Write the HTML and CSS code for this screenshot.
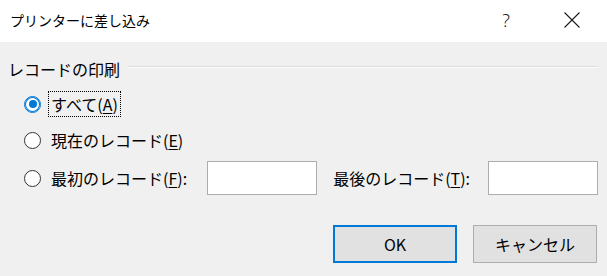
FILE: index.html
```html
<!DOCTYPE html>
<html lang="ja">
<head>
    <meta charset="UTF-8">
    <title>プリンターに差し込み</title>
    <link rel="stylesheet" href="styles.css">
</head>
<body>
    <div class="dialog">
        <!-- タイトルバー -->
        <div class="titlebar">
            <span class="title">プリンターに差し込み</span>
            <span class="help">?</span>
            <span class="close">
                <svg width="16" height="16" viewBox="0 0 16 16"><path d="M0.5 0.5 L15.5 15.5 M15.5 0.5 L0.5 15.5" stroke="#1a1a1a" stroke-width="1.1" fill="none"/></svg>
            </span>
        </div>

        <div class="content">
            <!-- レコードの印刷 -->
            <div class="group-head">
                <span class="group-label">レコードの印刷</span>
                <span class="group-line"></span>
            </div>

            <div class="row row-first">
                <span class="radio checked"></span>
                <span class="label focus">すべて(<u>A</u>)</span>
            </div>
            <div class="row row-second">
                <span class="radio"></span>
                <span class="label">現在のレコード(<u>E</u>)</span>
            </div>
            <div class="row row-range">
                <span class="radio"></span>
                <span class="label">最初のレコード(<u>F</u>):</span>
                <span class="input input-from"></span>
                <span class="label label-to">最後のレコード(<u>T</u>):</span>
                <span class="input input-to"></span>
            </div>

            <div class="buttons">
                <button class="btn btn-default">OK</button>
                <button class="btn">キャンセル</button>
            </div>
        </div>
    </div>
</body>
</html>
```

FILE: styles.css
```css
body { margin: 0; padding: 0; background: #f0f0f0; }
.dialog {
    width: 607px; height: 276px; background: #f0f0f0; color: #000;
    font-family: "Segoe UI", "Noto Sans CJK JP", sans-serif; font-size: 16px;
}
/* タイトルバー */
.titlebar {
    height: 42px; background: #fff; display: flex; align-items: center;
    padding-left: 10px;
}
.title { font-size: 14px; flex: 1; margin-top: -2px; }
.help { font-family: "Noto Sans", sans-serif; font-size: 18px; font-weight: 300; color: #222; margin-right: 54px; margin-top: -3px; }
.close { width: 16px; height: 16px; margin-right: 27px; margin-top: -2px; display: flex; }
/* 本体 */
.content { padding: 0 9px 0 8px; }
.group-head { display: flex; height: 22px; margin-top: 16px; }
.group-label { line-height: 22px; }
.group-line {
    flex: 1; height: 1px; margin-top: 8px; margin-left: 8px;
    background: #dcdcdc; border-bottom: 1px solid #fff;
}
.row { display: flex; align-items: center; }
.row-first { height: 26px; margin-top: 11px; }
.row-second { height: 26px; margin-top: 10px; }
.row-range { height: 34px; margin-top: 8px; }
.radio {
    width: 15px; height: 15px; border-radius: 50%; border: 1px solid #333;
    background: #fff; margin-left: 16px; flex: none; position: relative;
}
.radio.checked { border-color: #0078d7; box-shadow: inset 0 0 0 1px #0078d7; }
.radio.checked::after {
    content: ""; position: absolute; left: 3.5px; top: 3.5px; width: 8px; height: 8px;
    border-radius: 50%; background: #0078d7;
}
.label { margin-left: 7px; padding: 0 2px; border: 1px solid transparent; line-height: 24px; }
.label.focus { border: 1px dotted #000; }
.label-to { margin-left: 13px; }
u { text-underline-offset: 2px; }
.input {
    width: 108px; height: 32px; background: #fff; border: 1px solid #adadad; flex: none;
}
.input-from { margin-left: 17px; }
.input-to { margin-left: 15px; }
/* ボタン */
.buttons { display: flex; justify-content: flex-end; gap: 16px; margin-top: 30px; padding-right: 1px; }
.btn {
    width: 124px; height: 38px; background: #e1e1e1; border: 1px solid #adadad;
    font-family: inherit; font-size: 16px; color: #000; padding: 0;
}
.btn-default { border: 2px solid #0078d7; }
```
